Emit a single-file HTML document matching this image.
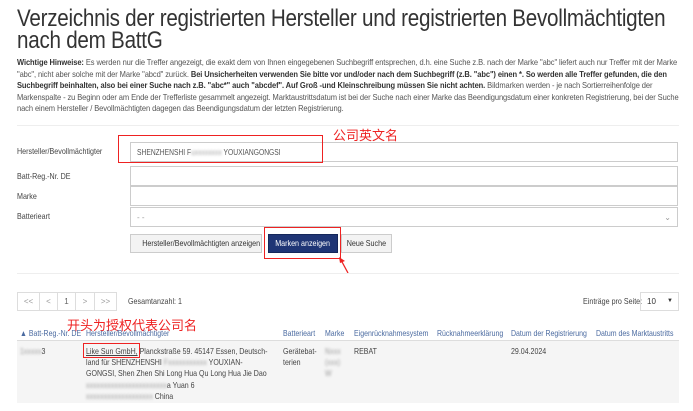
<!DOCTYPE html><html><head><meta charset="utf-8"><style>
body{margin:0;width:693px;height:411px;overflow:hidden;background:#fff;font-family:"Liberation Sans",sans-serif;color:#333;position:relative}
.a{position:absolute;white-space:nowrap}
.c{transform:scaleX(0.84);transform-origin:left}
h1{position:absolute;left:17px;top:8px;margin:0;font-weight:normal;font-size:24px;line-height:22px;color:#333;white-space:nowrap;letter-spacing:-0.3px;transform:scaleX(0.86);transform-origin:left}
.p{position:absolute;left:17px;top:57px;font-size:8.1px;line-height:11.5px;color:#555;transform:scaleX(0.93);transform-origin:left;letter-spacing:-0.1px;white-space:nowrap}
.p b{color:#333}
.lab{font-size:8.5px;color:#444;left:17px}
.in{position:absolute;left:130px;width:548px;height:20px;border:1px solid #ccc;background:#fff;font-size:8px;line-height:20px;box-sizing:border-box;padding-left:6px;color:#555;white-space:nowrap}
.btn{position:absolute;top:234px;height:19px;border:1px solid #ccc;background:#f3f3f3;font-size:8.5px;line-height:17px;text-align:center;box-sizing:border-box;color:#333;white-space:nowrap;overflow:hidden}
.btn span{display:inline-block;transform:scaleX(0.84)}
.red{position:absolute;border:1.5px solid #e22;box-sizing:border-box}
.rt{position:absolute;color:#e22;font-family:"Liberation Sans","Noto Sans CJK SC",sans-serif;font-size:13px;white-space:nowrap}
.pg{position:absolute;top:292px;height:19px;border:1px solid #ddd;font-size:8px;line-height:17px;text-align:center;color:#999;box-sizing:border-box}
.th{position:absolute;top:328px;font-size:8.3px;color:#4a6aa0;white-space:nowrap;transform:scaleX(0.84);transform-origin:left}
.td{position:absolute;top:346px;font-size:8.4px;line-height:11.2px;color:#444;white-space:nowrap;transform:scaleX(0.84);transform-origin:left}
.bl{color:transparent;text-shadow:0 0 3px #999}
</style></head><body>
<h1>Verzeichnis der registrierten Hersteller und registrierten Bevollmächtigten<br>nach dem BattG</h1>
<div class="p"><b>Wichtige Hinweise:</b> Es werden nur die Treffer angezeigt, die exakt dem von Ihnen eingegebenen Suchbegriff entsprechen, d.h. eine Suche z.B. nach der Marke "abc" liefert auch nur Treffer mit der Marke<br>"abc", nicht aber solche mit der Marke "abcd" zurück. <b>Bei Unsicherheiten verwenden Sie bitte vor und/oder nach dem Suchbegriff (z.B. "abc") einen *. So werden alle Treffer gefunden, die den</b><br><b>Suchbegriff beinhalten, also bei einer Suche nach z.B. "abc*" auch "abcdef". Auf Groß -und Kleinschreibung müssen Sie nicht achten.</b> Bildmarken werden - je nach Sortierreihenfolge der<br>Markenspalte - zu Beginn oder am Ende der Trefferliste gesammelt angezeigt. Marktaustrittsdatum ist bei der Suche nach einer Marke das Beendigungsdatum einer konkreten Registrierung, bei der Suche<br>nach einem Hersteller / Bevollmächtigten dagegen das Beendigungsdatum der letzten Registrierung.</div>
<div class="a" style="left:17px;top:125px;width:662px;border-top:1px solid #eee"></div>
<div class="a lab c" style="top:146px">Hersteller/Bevollmächtigter</div>
<div class="in" style="top:142px"><span style="display:inline-block" class="c">SHENZHENSHI F<span class="bl">uxxxxxxxx</span> YOUXIANGONGSI</span></div>
<div class="a lab c" style="top:171px">Batt-Reg.-Nr. DE</div><div class="in" style="top:166px"></div>
<div class="a lab c" style="top:191px">Marke</div><div class="in" style="top:186px"></div>
<div class="a lab c" style="top:211px">Batterieart</div><div class="in" style="top:207px;color:#999">- -<span style="position:absolute;right:6px">⌄</span></div>
<div class="btn" style="left:130px;width:132px"><span>Hersteller/Bevollmächtigten anzeigen</span></div>
<div class="btn" style="left:268px;width:70px;background:#1f3575;color:#fff;border-color:#15275a"><span>Marken anzeigen</span></div>
<div class="btn" style="left:341px;width:51px"><span>Neue Suche</span></div>
<div class="red" style="left:118px;top:135px;width:205px;height:28px"></div>
<div class="red" style="left:264px;top:227px;width:77px;height:32px"></div>
<div class="rt" style="left:333px;top:125px">公司英文名</div>
<svg class="a" style="left:336px;top:255px" width="16" height="20"><path d="M12 18 L5 5" stroke="#e22" stroke-width="1.3" fill="none"/><path d="M3 2 L9 6 L4 8Z" fill="#e22"/></svg>
<div class="a" style="left:17px;top:273px;width:662px;border-top:1px solid #eee"></div>
<div class="pg" style="left:17px;width:23px">&lt;&lt;</div><div class="pg" style="left:39px;width:19px">&lt;</div><div class="pg" style="left:57px;width:19px;color:#666">1</div><div class="pg" style="left:75px;width:20px">&gt;</div><div class="pg" style="left:94px;width:23px">&gt;&gt;</div>
<div class="a c" style="left:128px;top:296px;font-size:8.5px;color:#444">Gesamtanzahl: 1</div>
<div class="a c" style="left:583px;top:296px;font-size:8.5px;color:#444">Einträge pro Seite:</div>
<div class="pg" style="left:640px;width:39px;color:#333;text-align:left;padding-left:6px">10<span style="position:absolute;right:5px;font-size:6px">▼</span></div>
<div class="rt" style="left:67px;top:315px">开头为授权代表公司名</div>
<div class="th" style="left:20px">▲ Batt-Reg.-Nr. DE</div>
<div class="th" style="left:86px">Hersteller/Bevollmächtigter</div>
<div class="th" style="left:283px">Batterieart</div>
<div class="th" style="left:325px">Marke</div>
<div class="th" style="left:354px">Eigenrücknahmesystem</div>
<div class="th" style="left:437px">Rücknahmeerklärung</div>
<div class="th" style="left:511px">Datum der Registrierung</div>
<div class="th" style="left:596px">Datum des Marktaustritts</div>
<div class="a" style="left:17px;top:340px;width:662px;height:62px;background:#f5f5f5;border-top:1px solid #ddd"></div>
<div class="td" style="left:20px"><span class="bl">1xxxxx</span>3</div>
<div class="td" style="left:86px"><span style="text-decoration:underline">Like Sun GmbH,</span> Planckstraße 59. 45147 Essen, Deutsch-<br>land für SHENZHENSHI <span class="bl">Fxxxxxxxxxxx</span> YOUXIAN-<br>GONGSI, Shen Zhen Shi Long Hua Qu Long Hua Jie Dao<br><span class="bl">xxxxxxxxxxxxxxxxxxxxxxx</span>a Yuan 6<br><span class="bl">xxxxxxxxxxxxxxxxxxx</span> China</div>
<div class="td" style="left:283px">Gerätebat-<br>terien</div>
<div class="td" style="left:325px"><span class="bl">Nxxx<br>(xxx)<br>W</span></div>
<div class="td" style="left:354px">REBAT</div>
<div class="td" style="left:511px">29.04.2024</div>
<div class="red" style="left:83px;top:343px;width:57px;height:15px"></div>
</body></html>
